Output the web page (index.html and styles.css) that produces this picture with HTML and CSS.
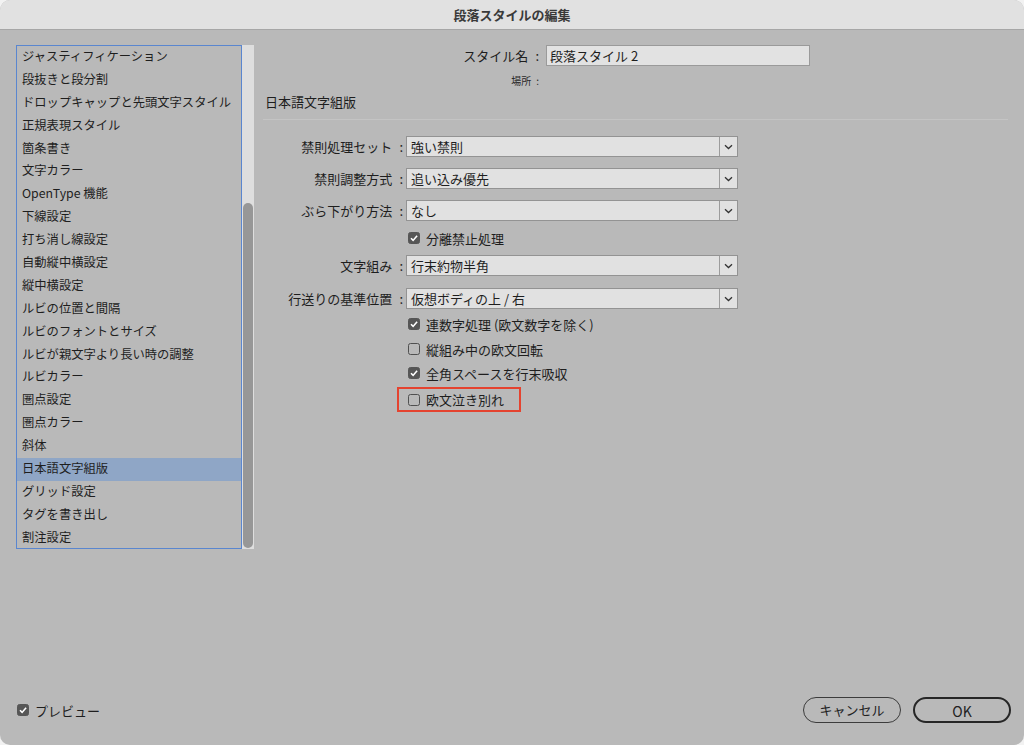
FILE: index.html
```html
<!DOCTYPE html>
<html lang="ja">
<head>
<meta charset="utf-8">
<title>段落スタイルの編集</title>
<link rel="stylesheet" href="styles.css">
</head>
<body>
<div class="window">
  <div class="titlebar">段落スタイルの編集</div>
  <div class="body">
    <div class="main">
      <div class="sidebar">
        <ul class="list">
          <li>ジャスティフィケーション</li>
          <li>段抜きと段分割</li>
          <li>ドロップキャップと先頭文字スタイル</li>
          <li>正規表現スタイル</li>
          <li>箇条書き</li>
          <li>文字カラー</li>
          <li>OpenType 機能</li>
          <li>下線設定</li>
          <li>打ち消し線設定</li>
          <li>自動縦中横設定</li>
          <li>縦中横設定</li>
          <li>ルビの位置と間隔</li>
          <li>ルビのフォントとサイズ</li>
          <li>ルビが親文字より長い時の調整</li>
          <li>ルビカラー</li>
          <li>圏点設定</li>
          <li>圏点カラー</li>
          <li>斜体</li>
          <li class="selected">日本語文字組版</li>
          <li>グリッド設定</li>
          <li>タグを書き出し</li>
          <li>割注設定</li>
        </ul>
        <div class="scrollbar"><div class="thumb"></div></div>
      </div>
      <div class="panel">
        <div class="name-row">
          <span class="name-label">スタイル名<span class="colon">:</span></span>
          <div class="textfield">段落スタイル 2</div>
        </div>
        <div class="loc-row">場所<span class="colon-s">:</span></div>
        <div class="section-title">日本語文字組版</div>
        <div class="rule"></div>
        <div class="form">
          <div class="row r-first">
            <span class="row-label">禁則処理セット<span class="colon">:</span></span>
            <div class="select"><span class="select-value">強い禁則</span><span class="select-arrow"><svg width="9" height="6" viewBox="0 0 9 6"><path d="M1 1.2l3.5 3.3 3.5-3.3" fill="none" stroke="#333" stroke-width="1.3"/></svg></span></div>
          </div>
          <div class="row r-dd">
            <span class="row-label">禁則調整方式<span class="colon">:</span></span>
            <div class="select"><span class="select-value">追い込み優先</span><span class="select-arrow"><svg width="9" height="6" viewBox="0 0 9 6"><path d="M1 1.2l3.5 3.3 3.5-3.3" fill="none" stroke="#333" stroke-width="1.3"/></svg></span></div>
          </div>
          <div class="row r-dd">
            <span class="row-label">ぶら下がり方法<span class="colon">:</span></span>
            <div class="select"><span class="select-value">なし</span><span class="select-arrow"><svg width="9" height="6" viewBox="0 0 9 6"><path d="M1 1.2l3.5 3.3 3.5-3.3" fill="none" stroke="#333" stroke-width="1.3"/></svg></span></div>
          </div>
          <div class="row check r-cb1">
            <span class="cb on"><svg width="12" height="12" viewBox="0 0 12 12"><path d="M3 6.3l2.1 2.1 4-4.6" fill="none" stroke="#fff" stroke-width="1.6"/></svg></span>
            <span class="cb-text">分離禁止処理</span>
          </div>
          <div class="row r-dd4">
            <span class="row-label">文字組み<span class="colon">:</span></span>
            <div class="select"><span class="select-value">行末約物半角</span><span class="select-arrow"><svg width="9" height="6" viewBox="0 0 9 6"><path d="M1 1.2l3.5 3.3 3.5-3.3" fill="none" stroke="#333" stroke-width="1.3"/></svg></span></div>
          </div>
          <div class="row r-dd5">
            <span class="row-label">行送りの基準位置<span class="colon">:</span></span>
            <div class="select"><span class="select-value">仮想ボディの上 / 右</span><span class="select-arrow"><svg width="9" height="6" viewBox="0 0 9 6"><path d="M1 1.2l3.5 3.3 3.5-3.3" fill="none" stroke="#333" stroke-width="1.3"/></svg></span></div>
          </div>
          <div class="row check r-cb2">
            <span class="cb on"><svg width="12" height="12" viewBox="0 0 12 12"><path d="M3 6.3l2.1 2.1 4-4.6" fill="none" stroke="#fff" stroke-width="1.6"/></svg></span>
            <span class="cb-text">連数字処理 (欧文数字を除く)</span>
          </div>
          <div class="row check r-cb3">
            <span class="cb"></span>
            <span class="cb-text">縦組み中の欧文回転</span>
          </div>
          <div class="row check r-cb4">
            <span class="cb on"><svg width="12" height="12" viewBox="0 0 12 12"><path d="M3 6.3l2.1 2.1 4-4.6" fill="none" stroke="#fff" stroke-width="1.6"/></svg></span>
            <span class="cb-text">全角スペースを行末吸収</span>
          </div>
          <div class="highlight">
            <span class="cb"></span>
            <span class="cb-text">欧文泣き別れ</span>
          </div>
        </div>
      </div>
    </div>
    <div class="footer">
      <div class="preview">
        <span class="cb on"><svg width="12" height="12" viewBox="0 0 12 12"><path d="M3 6.3l2.1 2.1 4-4.6" fill="none" stroke="#fff" stroke-width="1.6"/></svg></span>
        <span class="cb-text">プレビュー</span>
      </div>
      <div class="buttons">
        <button class="btn">キャンセル</button>
        <button class="btn primary">OK</button>
      </div>
    </div>
  </div>
</div>
</body>
</html>
```

FILE: styles.css
```css
* { box-sizing: border-box; }
html, body {
  margin: 0;
  padding: 0;
  background: #f2f2f2;
}
body {
  font-family: "Noto Sans CJK JP", "Noto Sans", sans-serif;
  font-size: 13px;
  color: #1e1e1e;
}
.window {
  width: 1024px;
  height: 745px;
  border-radius: 10px;
  overflow: hidden;
  background: #b9b9b9;
  display: flex;
  flex-direction: column;
}
.titlebar {
  height: 30px;
  flex: none;
  background: #e1e1e1;
  border-bottom: 1px solid #a6a6a6;
  text-align: center;
  line-height: 29px;
  font-size: 13px;
  font-weight: 700;
  color: #3a3a3a;
}
.body {
  flex: 1;
  display: flex;
  flex-direction: column;
}
.main {
  flex: 1;
  display: flex;
  padding-top: 15px;
}
.sidebar {
  display: flex;
  margin-left: 16px;
  height: 504px;
}
.list {
  list-style: none;
  margin: 0;
  padding: 0;
  width: 226px;
  height: 504px;
  border: 1px solid #5a86cf;
  overflow: hidden;
  font-size: 12.3px;
}
.list li {
  height: 22.9px;
  line-height: 21px;
  padding-left: 5px;
  white-space: nowrap;
  color: #1e1e1e;
}
.list li.selected {
  background: #8fa6c6;
}
.scrollbar {
  width: 12px;
  height: 504px;
  background: #dedede;
  padding: 0 1px 1px 1px;
  display: flex;
  flex-direction: column;
}
.thumb {
  margin-top: 158px;
  flex: 1;
  background: #979797;
  border-radius: 5px;
}
.panel {
  margin-left: 9px;
  width: 745px;
}
.name-row {
  display: flex;
  align-items: center;
  height: 21px;
}
.name-label {
  width: 277px;
  text-align: right;
  margin-right: 6px;
}
.colon {
  margin-left: 7px;
  margin-right: 1px;
}
.colon-s {
  margin-left: 5px;
  margin-right: 1px;
}
.textfield {
  width: 264px;
  height: 21px;
  background: #e2e2e2;
  border: 1px solid #9a9a9a;
  padding-left: 3px;
  line-height: 19px;
}
.loc-row {
  width: 277px;
  text-align: right;
  font-size: 10px;
  line-height: 12px;
  margin-top: 9px;
  color: #2a2a2a;
}
.section-title {
  margin-top: 6px;
  padding-left: 2px;
  line-height: 18px;
}
.rule {
  margin-top: 8px;
  height: 1px;
  background: #c4c4c4;
}
.form {
  margin-top: 16px;
}
.row {
  display: flex;
  align-items: center;
  height: 21px;
}
.row.check {
  height: 20px;
  padding-left: 145px;
}
.r-dd { margin-top: 11px; }
.r-cb1 { margin-top: 7px; }
.r-dd4 { margin-top: 7px; }
.r-dd5 { margin-top: 12px; }
.r-cb2 { margin-top: 5px; }
.r-cb3 { margin-top: 5px; }
.r-cb4 { margin-top: 4px; }
.row-label {
  width: 141px;
  text-align: right;
  margin-right: 2px;
  white-space: nowrap;
}
.select {
  width: 332px;
  height: 21px;
  display: flex;
  background: #e1e1e1;
  border: 1px solid #939393;
}
.select-value {
  flex: 1;
  padding-left: 4px;
  line-height: 19px;
}
.select-arrow {
  width: 18px;
  border-left: 1px solid #9c9c9c;
  display: flex;
  align-items: center;
  justify-content: center;
}
.cb {
  width: 12px;
  height: 12px;
  border-radius: 2.5px;
  border: 1px solid #505050;
  flex: none;
  display: flex;
}
.cb.on {
  background: #565656;
  border-color: #565656;
}
.cb svg { margin: -1px; }
.cb-text {
  margin-left: 6px;
  white-space: nowrap;
}
.highlight {
  margin-top: 4px;
  margin-left: 134px;
  width: 124px;
  height: 25px;
  border: 2px solid #e5432f;
  display: flex;
  align-items: center;
  padding-left: 9px;
}
.footer {
  display: flex;
  align-items: center;
  justify-content: space-between;
  padding: 0 13px 22px 17px;
}
.preview {
  display: flex;
  align-items: center;
}
.buttons {
  display: flex;
  gap: 12px;
}
.btn {
  width: 98px;
  height: 26px;
  border-radius: 13px;
  border: 1px solid #3c3c3c;
  background: transparent;
  font-family: "Noto Sans CJK JP", "Noto Sans", sans-serif;
  font-size: 13px;
  color: #222;
  padding: 0;
  line-height: 24px;
}
.btn.primary {
  border: 2px solid #262626;
  font-size: 14px;
}
```
